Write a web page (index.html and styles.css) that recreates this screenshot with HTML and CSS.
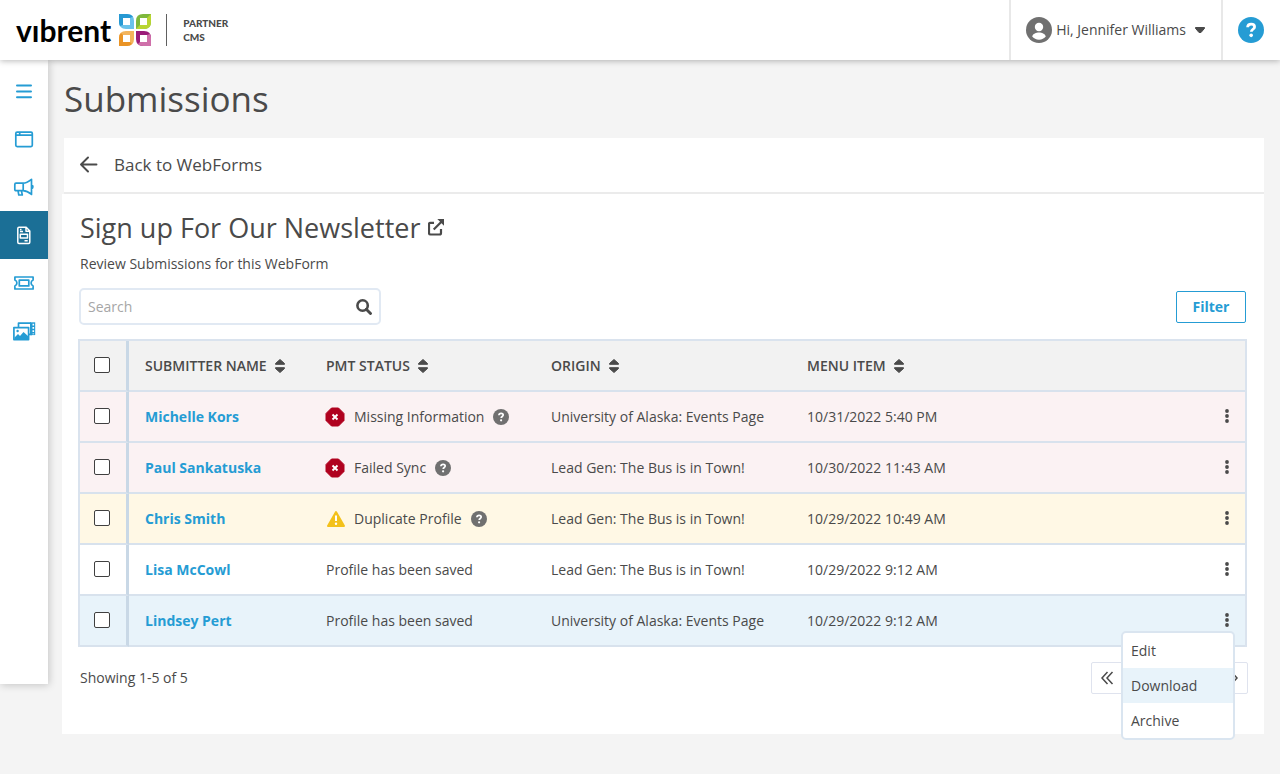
FILE: index.html
```html
<!DOCTYPE html>
<html lang="en">
<head>
<meta charset="utf-8">
<meta name="viewport" content="width=device-width, initial-scale=1">
<title>Submissions - Vibrent Partner CMS</title>
<link rel="stylesheet" href="styles.css">
</head>
<body>
<svg class="sprite" aria-hidden="true">
  <symbol id="sort" viewBox="0 0 12 16"><path d="M6 1.500 10.500 5.500v.8h-9v-.8zM6 14.500 10.500 10.500v-.8h-9v.8z" fill="currentColor" stroke="currentColor" stroke-linejoin="round"/></symbol>
  <symbol id="dots" viewBox="0 0 6 16"><g fill="currentColor"><circle cx="3" cy="3" r="1.900"/><circle cx="3" cy="8" r="1.900"/><circle cx="3" cy="13" r="1.900"/></g></symbol>
  <symbol id="help" viewBox="0 0 16 16"><circle cx="8" cy="8" r="8" fill="currentColor"/><path d="M5.900 6.300C6 4.900 7 4.400 8.100 4.400c1.200 0 2.100.7 2.100 1.700 0 1.400-2 1.500-2 3" fill="none" stroke="#fff" stroke-width="1.700"/><circle cx="8.100" cy="11.300" r="1.100" fill="#fff"/></symbol>
  <symbol id="error" viewBox="0 0 20 20"><path d="M6.500 1h7L19 6.500v7L13.500 19h-7L1 13.500v-7z" fill="#b0021f" stroke="#b0021f" stroke-linejoin="round"/><path d="m7.500 7.500 5 5m0-5-5 5" stroke="#fff" stroke-width="1.900"/></symbol>
  <symbol id="warning" viewBox="0 0 20 20"><path d="M11 3 19 17H3z" fill="#f3c11b" stroke="#f3c11b" stroke-width="2" stroke-linejoin="round"/><path d="M11 6.500v5.500" stroke="#fff" stroke-width="2"/><circle cx="11" cy="14.800" r="1.200" fill="#fff"/></symbol>
</svg>

<header class="topbar">
  <a class="brand" href="#" aria-label="Vibrent Partner CMS">
    <span class="wordmark">vıbrent</span>
    <svg class="brand-mark" viewBox="0 0 32 32" aria-hidden="true">
      <path d="M0 0h8q7 0 7 7v8H7q-7 0-7-7z" fill="#6ac2ea"/><path d="M0 0h8q4 0 6 2.500L11 4H4v7l-3 1Q0 10.500 0 8z" fill="#2799d3"/><path d="M4 4h7v7H4z" fill="#fff"/>
      <path d="M32 0v8q0 7-7 7h-8V7q0-7 7-7z" fill="#7eb83c"/><path d="M32 0v8q0 7-7 7h-8l4-4h7V4z" fill="#b9d532"/><path d="M21 4h7v7h-7z" fill="#fff"/>
      <path d="M0 32v-8q0-7 7-7h8v8q0 7-7 7z" fill="#f3b45c"/><path d="M0 32v-8q0-3.500 2-5l2 2v7h7l2 2q-2 2-5 2z" fill="#ea9426"/><path d="M4 21h7v7H4z" fill="#fff"/>
      <path d="M32 32h-8q-7 0-7-7v-8h8q7 0 7 7z" fill="#9b1b79"/><path d="M32 32h-8q-3 0-5-2l2-2h7v-7l3-1q1 1.500 1 4z" fill="#cf70aa"/><path d="M21 21h7v7h-7z" fill="#fff"/>
    </svg>
    <span class="brand-sub">PARTNER<br>CMS</span>
  </a>
  <button class="user" type="button">
    <svg class="avatar" viewBox="0 0 26 26" aria-hidden="true"><circle cx="13" cy="13" r="13" fill="#707070"/><circle cx="13" cy="10" r="4.200" fill="#fff"/><path d="M6.200 19.500c.8-3 4-4 6.800-4s6 1 6.800 4c-1.500 2-4 3.200-6.800 3.200s-5.300-1.200-6.800-3.200z" fill="#fff"/></svg>
    <span>Hi, Jennifer Williams</span>
    <svg class="caret" viewBox="0 0 12 8" aria-hidden="true"><path d="M1.500 1.500h9v.8L7 6.500H5L1.500 2.300z" fill="currentColor" stroke="currentColor" stroke-linejoin="round"/></svg>
  </button>
  <button class="help" type="button" aria-label="Help"><svg viewBox="0 0 16 16"><use href="#help"/></svg></button>
</header>

<div class="shell">
  <nav class="sidebar" aria-label="Main">
    <a href="#" aria-label="Menu"><svg viewBox="0 0 24 24"><path d="M5 6.500h14M5 12.500h14M5 18.300h14" stroke-width="2" stroke-linecap="round"/></svg></a>
    <a href="#" aria-label="Pages"><svg viewBox="0 0 24 24"><rect x="3.800" y="5.200" width="16.500" height="14.400" rx="1.300"/><path d="M4 8.200h16M7.700 5.500v3"/></svg></a>
    <a href="#" aria-label="Announcements"><svg viewBox="0 0 24 24"><path d="M4 8.200h7c3.500 0 6-1.800 8.500-3.800v15C17 17.300 14.500 15.700 11 15.700H4q-1.200 0-1.200-1.200V9.400Q2.800 8.200 4 8.200zM11.200 8.200v7.500M6 15.700l.8 4.300h3.500l-.9-4.300M19.700 10q1.200.2 1.200 1.800t-1.200 1.800"/></svg></a>
    <a class="active" href="#" aria-label="WebForms" aria-current="page"><svg viewBox="0 0 24 24"><path d="M7 4.300h7.200l3.600 3.700v11.300q0 1.200-1.200 1.200H7q-1.200 0-1.200-1.200V5.500Q5.800 4.300 7 4.300zM14 4.500v3.800h3.700M8.300 11.200h7.200v3.800H8.300zM8 8.600h3M12.500 17.800h3.200M8 6.500h1.500" stroke-width="1.500"/></svg></a>
    <a href="#" aria-label="Tickets"><svg viewBox="0 0 24 24"><path d="M2.900 6h18.200v3q-2 .8-2 3t2 3v3H2.900v-3q2-.8 2-3t-2-3z"/><rect x="7.300" y="9.100" width="9.500" height="5.800"/></svg></a>
    <a href="#" aria-label="Media"><svg viewBox="0 0 24 24"><path d="M6.500 8V4.100H19M17 15.300h3"/><path d="M18 3.300h5.200v12.800H18z" fill="currentColor" stroke="none"/><path d="M21.300 4.800v10.500" stroke="#fff" stroke-width="1.600" stroke-dasharray="1.700 1.500"/><rect x="1.900" y="8.600" width="14.700" height="12"/><path d="m2.500 18.500 3.500-3.500 2 2 3.500-4 4.500 4v3.300H2.500z" fill="currentColor" stroke="none"/><circle cx="5.600" cy="12" r="1.200" fill="currentColor" stroke="none"/></svg></a>
  </nav>

  <main class="main">
    <h1>Submissions</h1>
    <a class="back" href="#">
      <svg viewBox="0 0 18 18" aria-hidden="true"><path d="M16.500 8.500H1M8 1.500l-7 7 7 7" fill="none" stroke="currentColor" stroke-width="1.900" stroke-linecap="round" stroke-linejoin="round"/></svg>
      <span>Back to WebForms</span>
    </a>
    <section class="panel">
      <h2>Sign up For Our Newsletter
        <a href="#" aria-label="Open form in a new tab"><svg viewBox="0 0 18 18"><path d="M6 3.800H2.500Q1 3.800 1 5v9q0 1.500 1.500 1.500h9q1.500 0 1.500-1.500v-4M5.700 10.500l8-8" fill="none" stroke="currentColor" stroke-width="2.200"/><path d="M9.300 0H16v6.800z" fill="currentColor"/></svg></a>
      </h2>
      <p class="intro">Review Submissions for this WebForm</p>
      <div class="tools">
        <div class="search">
          <input type="search" placeholder="Search" aria-label="Search submissions">
          <button type="button" aria-label="Search"><svg viewBox="0 0 16 16"><circle cx="6.600" cy="6.500" r="5.200" fill="none" stroke="currentColor" stroke-width="2.600"/><path d="m10.300 10.300 4.200 4.200" stroke="currentColor" stroke-width="2.900" stroke-linecap="round"/></svg></button>
        </div>
        <button class="filter" type="button">Filter</button>
      </div>

      <table>
        <colgroup><col class="c-check"><col class="c-name"><col class="c-status"><col class="c-origin"><col><col class="c-act"></colgroup>
        <thead>
          <tr>
            <th><input type="checkbox" aria-label="Select all"></th>
            <th scope="col"><button type="button">SUBMITTER NAME<svg><use href="#sort"/></svg></button></th>
            <th scope="col"><button type="button">PMT STATUS<svg><use href="#sort"/></svg></button></th>
            <th scope="col"><button type="button">ORIGIN<svg><use href="#sort"/></svg></button></th>
            <th scope="col"><button type="button">MENU ITEM<svg><use href="#sort"/></svg></button></th>
            <th></th>
          </tr>
        </thead>
        <tbody>
          <tr class="bad">
            <td><input type="checkbox" aria-label="Select Michelle Kors"></td>
            <td><a href="#">Michelle Kors</a></td>
            <td><div class="status"><svg class="flag"><use href="#error"/></svg>Missing Information<button type="button" aria-label="About this status"><svg><use href="#help"/></svg></button></div></td>
            <td>University of Alaska: Events Page</td>
            <td>10/31/2022 5:40 PM</td>
            <td><button class="more" type="button" aria-label="Actions"><svg><use href="#dots"/></svg></button></td>
          </tr>
          <tr class="bad">
            <td><input type="checkbox" aria-label="Select Paul Sankatuska"></td>
            <td><a href="#">Paul Sankatuska</a></td>
            <td><div class="status"><svg class="flag"><use href="#error"/></svg>Failed Sync<button type="button" aria-label="About this status"><svg><use href="#help"/></svg></button></div></td>
            <td>Lead Gen: The Bus is in Town!</td>
            <td>10/30/2022 11:43 AM</td>
            <td><button class="more" type="button" aria-label="Actions"><svg><use href="#dots"/></svg></button></td>
          </tr>
          <tr class="warn">
            <td><input type="checkbox" aria-label="Select Chris Smith"></td>
            <td><a href="#">Chris Smith</a></td>
            <td><div class="status"><svg class="flag"><use href="#warning"/></svg>Duplicate Profile<button type="button" aria-label="About this status"><svg><use href="#help"/></svg></button></div></td>
            <td>Lead Gen: The Bus is in Town!</td>
            <td>10/29/2022 10:49 AM</td>
            <td><button class="more" type="button" aria-label="Actions"><svg><use href="#dots"/></svg></button></td>
          </tr>
          <tr>
            <td><input type="checkbox" aria-label="Select Lisa McCowl"></td>
            <td><a href="#">Lisa McCowl</a></td>
            <td>Profile has been saved</td>
            <td>Lead Gen: The Bus is in Town!</td>
            <td>10/29/2022 9:12 AM</td>
            <td><button class="more" type="button" aria-label="Actions"><svg><use href="#dots"/></svg></button></td>
          </tr>
          <tr class="current">
            <td><input type="checkbox" aria-label="Select Lindsey Pert"></td>
            <td><a href="#">Lindsey Pert</a></td>
            <td>Profile has been saved</td>
            <td>University of Alaska: Events Page</td>
            <td>10/29/2022 9:12 AM</td>
            <td>
              <button class="more" type="button" aria-label="Actions" aria-expanded="true"><svg><use href="#dots"/></svg></button>
              <div class="menu" role="menu">
                <button type="button" role="menuitem">Edit</button>
                <button class="hover" type="button" role="menuitem">Download</button>
                <button type="button" role="menuitem">Archive</button>
              </div>
            </td>
          </tr>
        </tbody>
      </table>

      <div class="foot">
        <span>Showing 1-5 of 5</span>
        <div class="pager">
          <button type="button" aria-label="First page"><svg viewBox="0 0 16 16"><path d="M8.500 2 3 8l5.500 6M13.500 2 8 8l5.500 6"/></svg></button>
          <button type="button" aria-label="Last page"><svg viewBox="0 0 16 16"><path d="m7.500 2 5.500 6-5.500 6M2.500 2 8 8l-5.500 6"/></svg></button>
        </div>
      </div>
    </section>
  </main>
</div>
</body>
</html>
```
FILE: styles.css
```css
* { box-sizing: border-box; }
body {
  margin: 0;
  background: #f4f4f4;
  color: #4a4a4a;
  font: 14px/20px "Open Sans", "Noto Sans", sans-serif;
}
button, input { font: inherit; color: inherit; }
button { border: 0; background: none; padding: 0; cursor: pointer; }
a { color: inherit; text-decoration: none; }
svg { display: block; }
.sprite { position: absolute; width: 0; height: 0; }

.topbar {
  position: relative;
  z-index: 2;
  display: flex;
  height: 60px;
  background: #fff;
  box-shadow: 0 1px 6px rgba(0, 0, 0, .28);
}
.brand { display: flex; align-items: center; margin-right: auto; padding-left: 16px; }
.wordmark { color: #000; font: 700 30px/36px Lato, sans-serif; }
.brand-mark { width: 32px; height: 32px; margin-left: 8px; }
.brand-sub {
  margin-left: 15px;
  padding: 2px 0 2px 16px;
  border-left: 1px solid #606060;
  font: 900 10px/14px Lato, sans-serif;
}
.user { display: flex; align-items: center; padding: 0 15px; border-left: 2px solid #e8e8e8; }
.avatar { width: 26px; height: 26px; margin-right: 4px; }
.caret { width: 12px; height: 8px; margin-left: 8px; }
.help { padding: 0 16px 0 15px; border-left: 2px solid #e8e8e8; color: #259cd4; }
.help svg { width: 26px; height: 26px; }

.shell { display: flex; align-items: flex-start; }
.sidebar {
  flex: none;
  width: 48px;
  min-height: calc(100vh - 150px);
  padding-top: 7px;
  background: #fff;
  box-shadow: 1px 1px 8px rgba(0, 0, 0, .2);
}
.sidebar a { display: grid; place-items: center; height: 48px; color: #259cd4; }
.sidebar a.active { background: #1b6f96; color: #fff; }
.sidebar svg { width: 24px; height: 24px; fill: none; stroke: currentColor; stroke-width: 1.7; stroke-linejoin: round; }

.main { flex: 1; min-width: 0; padding: 14px 16px 40px 14px; }
h1 { margin: 0 0 14px 2px; font-size: 35px; line-height: 50px; font-weight: 400; }
.back {
  display: flex;
  align-items: center;
  gap: 16px;
  height: 56px;
  margin-left: 2px;
  padding-left: 16px;
  border-bottom: 2px solid #ebebeb;
  background: #fff;
  font-size: 17px;
  line-height: 24px;
}
.back svg { width: 18px; height: 18px; }
.panel { padding: 14px 17px 40px 16px; background: #fff; }
h2 { display: flex; align-items: center; gap: 8px; margin: 0 2px; font-size: 27px; line-height: 40px; font-weight: 400; }
h2 svg { width: 18px; height: 18px; }
.intro { margin: 6px 2px 14px; }
.tools { display: flex; align-items: center; justify-content: space-between; margin: 0 1px 14px; }
.search {
  display: flex;
  align-items: center;
  width: 302px;
  height: 37px;
  padding: 0 7px;
  border: 2px solid #e1e9f3;
  border-radius: 5px;
}
.search input { flex: 1; min-width: 0; padding: 0; border: 0; outline: 0; background: none; }
.search input::placeholder { color: #a6a6a6; opacity: 1; }
.search svg { width: 16px; height: 16px; }
.filter {
  width: 70px;
  height: 32px;
  border: 1px solid #259cd4;
  border-radius: 2px;
  color: #259cd4;
  font-weight: 700;
}

table {
  width: 100%;
  table-layout: fixed;
  border: 2px solid #dae3ee;
  border-bottom: 0;
  border-collapse: separate;
  border-spacing: 0;
}
.c-check { width: 49px; }
.c-name { width: 181px; }
.c-status { width: 225px; }
.c-origin { width: 256px; }
.c-act { width: 40px; }
th, td { height: 51px; padding: 0 0 0 16px; border-bottom: 2px solid #d8e2ed; text-align: left; white-space: nowrap; }
th { background: #f2f2f2; font-weight: 600; }
th:first-child, td:first-child { padding: 0 0 2px 14px; border-right: 3px solid #c9d8e6; }
th button { display: flex; align-items: center; gap: 7px; }
th svg { width: 12px; height: 16px; }
td a { color: #259cd4; font-weight: 700; }
.bad { background: #fbf2f3; }
.warn { background: #fff8e5; }
.current { background: #e8f3fa; }
input[type="checkbox"] {
  display: block;
  appearance: none;
  width: 16px;
  height: 16px;
  margin: 0;
  border: 1px solid #404040;
  border-radius: 2px;
  background: #fff;
}
.status { display: flex; align-items: center; }
.status .flag { width: 20px; height: 20px; margin: 0 9px 0 -1px; }
.status button { margin-left: 9px; color: #707070; }
.status button svg { width: 16px; height: 16px; }
td:last-child { position: relative; padding: 0 0 2px 19px; }
.more { display: block; }
.more svg { width: 6px; height: 16px; }

.menu {
  position: absolute;
  z-index: 1;
  top: 35px;
  right: 10px;
  width: 114px;
  border: 2px solid #dae5f0;
  border-radius: 5px;
  background: #fff;
  overflow: hidden;
}
.menu button { display: block; width: 100%; height: 35px; padding: 0 8px; text-align: left; }
.menu .hover { background: #e8f3fa; }

.foot { display: flex; align-items: center; justify-content: space-between; margin: 15px -1px 0 2px; }
.pager { display: flex; justify-content: space-between; width: 157px; border: 1px solid #dfe3ee; border-radius: 2px; }
.pager button { display: grid; place-items: center; width: 30px; height: 30px; }
.pager svg { width: 16px; height: 16px; fill: none; stroke: currentColor; stroke-width: 1.5; }
```
